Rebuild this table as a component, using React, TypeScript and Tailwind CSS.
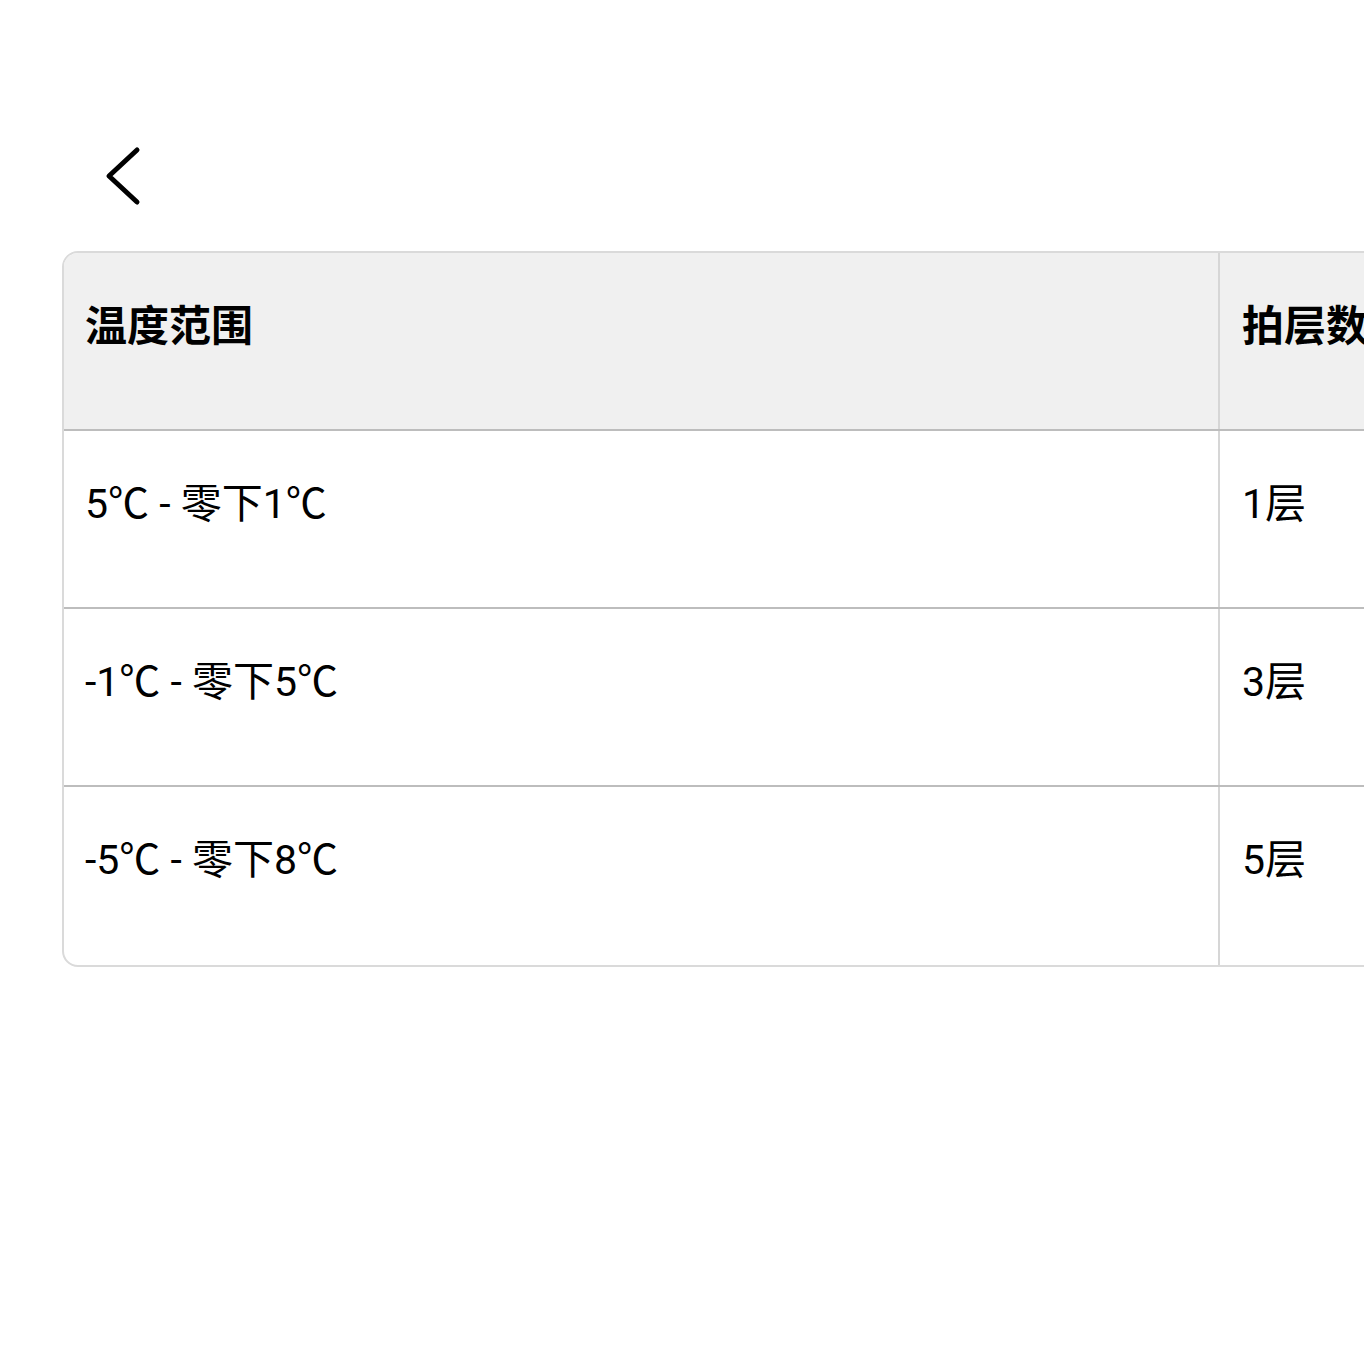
const rows = [
  { range: "5℃ - 零下1℃", layers: "1层" },
  { range: "-1℃ - 零下5℃", layers: "3层" },
  { range: "-5℃ - 零下8℃", layers: "5层" },
];

const App = () => {
  return (
    <div
      className="w-[1364px] h-[1364px] overflow-hidden bg-white text-black"
      style={{ fontFamily: 'Roboto, "Noto Sans CJK SC", sans-serif' }}
    >
      {/* Back button */}
      <div className="pt-[140px] pl-[100px] h-[251px]">
        <svg width="48" height="72" viewBox="0 0 48 72" fill="none">
          <polyline
            points="37,10 9,36 37,62"
            stroke="#000"
            strokeWidth="5"
            strokeLinecap="round"
            strokeLinejoin="round"
          />
        </svg>
      </div>

      {/* Table */}
      <div className="ml-[62px] w-[1500px] rounded-[16px] border-2 border-[#dadada] overflow-hidden">
        <div className="flex h-[178px] bg-[#f0f0f0] border-b-2 border-[#bdbdbd]">
          <div className="w-[1156px] border-r-2 border-[#d6d6d6] px-[21px] pt-[42px] text-[42px] leading-[63px] font-bold">
            温度范围
          </div>
          <div className="flex-1 px-[22px] pt-[42px] text-[42px] leading-[63px] font-bold">
            拍层数
          </div>
        </div>
        {rows.map((row, i) => (
          <div
            key={row.layers}
            className={`flex h-[178px] ${i < rows.length - 1 ? "border-b-2 border-[#bdbdbd]" : ""}`}
          >
            <div className="w-[1156px] border-r-2 border-[#d6d6d6] px-[21px] pt-[42px] text-[41px] leading-[63px]">
              {row.range}
            </div>
            <div className="flex-1 px-[22px] pt-[42px] text-[41px] leading-[63px]">
              {row.layers}
            </div>
          </div>
        ))}
      </div>
    </div>
  );
};

export default App;
